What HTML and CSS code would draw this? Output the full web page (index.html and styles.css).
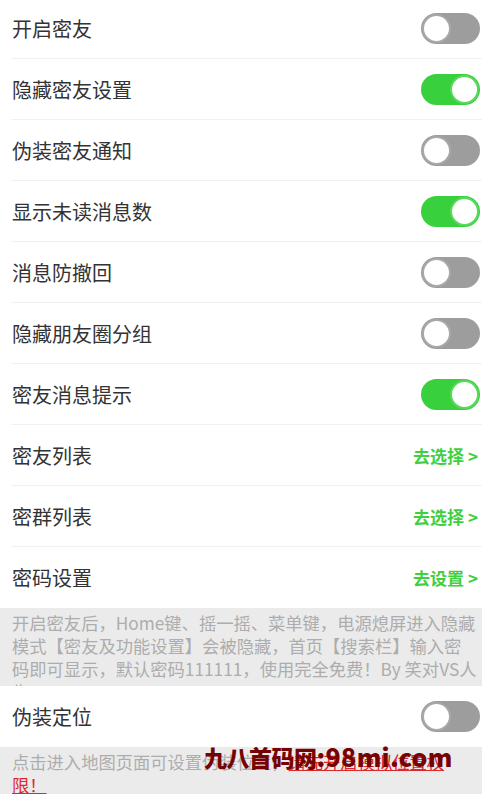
FILE: index.html
```html
<!DOCTYPE html>
<html lang="zh">
<head>
<meta charset="utf-8">
<link rel="stylesheet" href="styles.css">
</head>
<body>
<div class="page">
  <div class="list">
    <div class="row"><span class="label">开启密友</span><span class="toggle"></span></div>
    <div class="row"><span class="label">隐藏密友设置</span><span class="toggle on"></span></div>
    <div class="row"><span class="label">伪装密友通知</span><span class="toggle"></span></div>
    <div class="row"><span class="label">显示未读消息数</span><span class="toggle on"></span></div>
    <div class="row"><span class="label">消息防撤回</span><span class="toggle"></span></div>
    <div class="row"><span class="label">隐藏朋友圈分组</span><span class="toggle"></span></div>
    <div class="row"><span class="label">密友消息提示</span><span class="toggle on"></span></div>
    <div class="row"><span class="label">密友列表</span><span class="link">去选择 &gt;</span></div>
    <div class="row"><span class="label">密群列表</span><span class="link">去选择 &gt;</span></div>
    <div class="row last"><span class="label">密码设置</span><span class="link">去设置 &gt;</span></div>
  </div>
  <div class="note clip">开启密友后，Home键、摇一摇、菜单键，电源熄屏进入隐藏模式【密友及功能设置】会被隐藏，首页【搜索栏】输入密码即可显示，默认密码111111，使用完全免费！By 笑对VS人生</div>
  <div class="list">
    <div class="row last"><span class="label">伪装定位</span><span class="toggle"></span></div>
  </div>
  <div class="note bottom">点击进入地图页面可设置伪装位置，<span class="warn">请先开启模拟位置权限！</span>
    <span class="watermark">九八首码网<span class="wm-latin">:98mi.com</span></span>
  </div>
</div>
</body>
</html>
```

FILE: styles.css
```css
html, body {
  margin: 0;
  padding: 0;
  background: #ffffff;
  overflow: hidden;
}
body {
  font-family: "Noto Sans CJK SC", "Noto Sans", sans-serif;
}
.page {
  margin-top: -2px;
}
.list {
  padding-left: 11px;
  background: #ffffff;
}
.row {
  height: 60px;
  display: flex;
  align-items: center;
  justify-content: space-between;
  padding: 0 2px 0 1px;
  border-bottom: 1px solid #f1f1f1;
}
.row.last {
  border-bottom: none;
  height: 61px;
}
.label {
  font-size: 20px;
  color: #333333;
}
.toggle {
  position: relative;
  width: 59px;
  height: 31px;
  border-radius: 16px;
  background: #9d9d9d;
}
.toggle::after {
  content: "";
  position: absolute;
  top: 1px;
  left: 1px;
  width: 29px;
  height: 29px;
  border-radius: 50%;
  background: #ffffff;
  box-sizing: border-box;
  border: 2px solid #a8a8a8;
}
.toggle.on {
  background: #38d03c;
}
.toggle.on::after {
  left: 29px;
  border-color: #5ad85c;
}
.link {
  font-size: 17px;
  font-weight: 700;
  color: #3ed041;
  margin-right: 2px;
}
.note {
  background: #ebebeb;
  color: #adadad;
  font-size: 17.3px;
  line-height: 23px;
  padding: 3px 5px 0 12px;
}
.note.clip {
  height: 75px;
  overflow: hidden;
}
.note.bottom {
  position: relative;
  height: 60px;
}
.warn {
  color: #e0282c;
  text-decoration: underline;
}
.watermark {
  position: absolute;
  left: 204px;
  top: -6px;
  font-size: 23px;
  line-height: 30px;
  font-weight: 900;
  color: #760303;
  letter-spacing: -0.5px;
  white-space: nowrap;
  font-family: "Noto Sans CJK SC", "DejaVu Sans", sans-serif;
}
.wm-latin {
  font-size: 25px;
  letter-spacing: 0.3px;
}
```
